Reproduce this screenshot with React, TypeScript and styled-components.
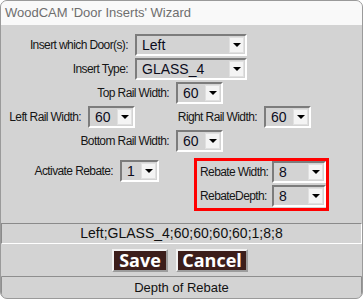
import { FunctionComponent } from "react";
import styled, { createGlobalStyle } from "styled-components";

const GlobalStyle = createGlobalStyle`
  html, body {
    margin: 0;
    padding: 0;
    background: #ffffff;
  }
`;

const Window = styled.div`
  width: 363px;
  height: 299px;
  box-sizing: border-box;
  border: 1px solid #9a9a9a;
  border-radius: 7px;
  overflow: hidden;
  background: #d3d3d3;
  display: flex;
  flex-direction: column;
  font-family: "Liberation Sans", Arial, sans-serif;
  color: #161616;
`;

const TitleBar = styled.div`
  height: 24px;
  background: #f9f9f9;
  color: #6e6e6e;
  font-size: 13px;
  line-height: 24px;
  padding-left: 4px;
  flex-shrink: 0;
`;

const Form = styled.div`
  display: flex;
  flex-direction: column;
  gap: 2px;
  padding-top: 9px;
`;

const Row = styled.div`
  display: flex;
  align-items: center;
  height: 22px;
`;

const Label = styled.div<{ $w: number }>`
  width: ${(p) => p.$w}px;
  flex-shrink: 0;
  box-sizing: border-box;
  padding-right: 7px;
  text-align: right;
  font-size: 12px;
  letter-spacing: -0.6px;
  white-space: nowrap;
`;

const BoxLabel = styled(Label)`
  text-align: left;
  padding: 0 0 0 3px;
`;

const Select = styled.div<{ $w: number }>`
  width: ${(p) => p.$w}px;
  height: 22px;
  flex-shrink: 0;
  box-sizing: border-box;
  display: flex;
  align-items: center;
  border: 2px solid;
  border-color: #7c7c7c #ffffff #ffffff #7c7c7c;
  padding-left: 5px;
  font-size: 14px;
  color: #0c0c1c;
`;

const Arrow = styled.span`
  margin-left: auto;
  margin-right: 1px;
  width: 15px;
  height: 16px;
  box-sizing: border-box;
  background: #f4f4f4;
  border: 1px solid #e0e0e0;
  display: flex;
  align-items: center;
  justify-content: center;
  &::after {
    content: "";
    border-left: 4px solid transparent;
    border-right: 4px solid transparent;
    border-top: 4px solid #000;
  }
`;

const RebateRow = styled.div`
  display: flex;
  align-items: flex-start;
  margin-top: 6px;
`;

const RebateBox = styled.div`
  margin-left: 35px;
  width: 135px;
  box-sizing: border-box;
  border: 3px solid #ff0000;
  display: flex;
  flex-direction: column;
  gap: 2px;
  padding-bottom: 1px;
`;

const Output = styled.div`
  margin: 12px 0 0 0;
  height: 21px;
  box-sizing: border-box;
  border: 1px solid;
  border-color: #8a8a8a #ffffff #ffffff #8a8a8a;
  font-size: 14px;
  line-height: 19px;
  text-align: center;
  color: #101010;
`;

const Buttons = styled.div`
  display: flex;
  justify-content: center;
  gap: 8px;
  margin-top: 5px;
  padding-right: 3px;
`;

const Button = styled.button<{ $w: number }>`
  width: ${(p) => p.$w}px;
  height: 23px;
  box-sizing: border-box;
  padding: 0;
  background: #3c1e1b;
  color: #ffffff;
  border: 2px solid;
  border-color: #f2f2f2 #9c9c9c #9c9c9c #f2f2f2;
  font-family: "Open Sans", "DejaVu Sans", sans-serif;
  font-weight: 700;
  font-size: 18px;
  line-height: 17px;
`;

const Status = styled.div`
  margin-top: 4px;
  height: 24px;
  box-sizing: border-box;
  border: 1px solid #8e8e8e;
  border-radius: 0 0 6px 6px;
  font-size: 13px;
  line-height: 22px;
  text-align: center;
  color: #111;
`;

const Field: FunctionComponent<{ label: string; lw: number; value: string; sw: number }> = ({
  label,
  lw,
  value,
  sw,
}) => (
  <>
    <Label $w={lw}>{label}</Label>
    <Select $w={sw}>
      {value}
      <Arrow />
    </Select>
  </>
);

const App: FunctionComponent = () => {
  return (
    <>
      <GlobalStyle />
      <Window>
        <TitleBar>WoodCAM 'Door Inserts' Wizard</TitleBar>
        <Form>
          <Row>
            <Field label="Insert which Door(s):" lw={134} value="Left" sw={112} />
          </Row>
          <Row>
            <Field label="Insert Type:" lw={134} value="GLASS_4" sw={112} />
          </Row>
          <Row>
            <Field label="Top Rail Width:" lw={175} value="60" sw={47} />
          </Row>
          <Row>
            <Field label="Left Rail Width:" lw={87} value="60" sw={47} />
            <Field label="Right Rail Width:" lw={129} value="60" sw={47} />
          </Row>
          <Row>
            <Field label="Bottom Rail Width:" lw={175} value="60" sw={47} />
          </Row>
        </Form>
        <RebateRow>
          <Row style={{ marginTop: 2 }}>
            <Field label="Activate Rebate:" lw={119} value="1" sw={39} />
          </Row>
          <RebateBox>
            <Row>
              <BoxLabel $w={75}>Rebate Width:</BoxLabel>
              <Select $w={54}>
                8
                <Arrow />
              </Select>
            </Row>
            <Row>
              <BoxLabel $w={75}>RebateDepth:</BoxLabel>
              <Select $w={54}>
                8
                <Arrow />
              </Select>
            </Row>
          </RebateBox>
        </RebateRow>
        <Output>Left;GLASS_4;60;60;60;60;1;8;8</Output>
        <Buttons>
          <Button $w={56}>Save</Button>
          <Button $w={72}>Cancel</Button>
        </Buttons>
        <Status>Depth of Rebate</Status>
      </Window>
    </>
  );
};

export default App;
